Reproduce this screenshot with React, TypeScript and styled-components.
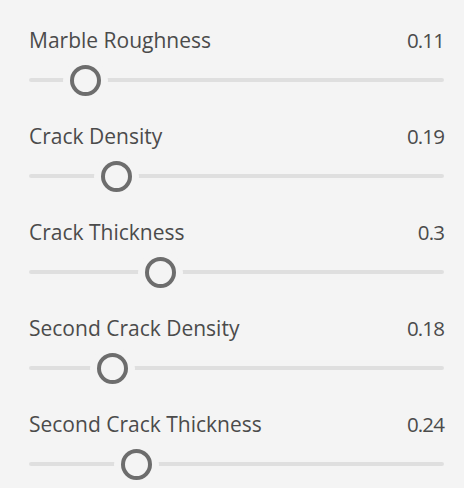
import React from 'react'
import styled, { createGlobalStyle } from 'styled-components'

const GlobalStyle = createGlobalStyle`
  html, body {
    margin: 0;
    padding: 0;
    background: #f4f4f4;
  }
  body {
    font-family: "Open Sans", "Liberation Sans", sans-serif;
  }
`

interface SliderItem {
  label: string
  value: number
}

const sliders: SliderItem[] = [
  { label: 'Marble Roughness', value: 0.11 },
  { label: 'Crack Density', value: 0.19 },
  { label: 'Crack Thickness', value: 0.3 },
  { label: 'Second Crack Density', value: 0.18 },
  { label: 'Second Crack Thickness', value: 0.24 },
]

const Panel = styled.div`
  width: 464px;
  height: 488px;
  box-sizing: border-box;
  padding: 16px 20px 0 29px;
  display: flex;
  flex-direction: column;
  gap: 16px;
  background: #f4f4f4;
  overflow: hidden;
`

const Row = styled.div`
  display: flex;
  flex-direction: column;
`

const Header = styled.div`
  height: 48px;
  display: flex;
  align-items: center;
  justify-content: space-between;
  color: #4b4b4b;
  font-size: 21px;
`

const Label = styled.span``

const Value = styled.span`
  font-size: 20.5px;
  letter-spacing: -0.9px;
`

const Track = styled.div`
  position: relative;
  height: 32px;
  display: flex;
  align-items: center;
  &::before {
    content: '';
    display: block;
    width: 100%;
    height: 4px;
    border-radius: 2px;
    background: #dfdfdf;
  }
`

const Knob = styled.div`
  position: absolute;
  top: 50%;
  width: 31px;
  height: 31px;
  box-sizing: border-box;
  margin: -15.5px 0 0 -15.5px;
  border-radius: 50%;
  border: 4px solid #6d6d6d;
  background: #f4f4f4;
  box-shadow: 0 0 0 7px #f4f4f4;
`

function Slider({ label, value }: SliderItem) {
  // knob centre measured in px from the track's left edge
  const left = 12.6 + value * 395
  return (
    <Row>
      <Header>
        <Label>{label}</Label>
        <Value>{value}</Value>
      </Header>
      <Track>
        <Knob style={{ left }} />
      </Track>
    </Row>
  )
}

export default function App() {
  return (
    <>
      <GlobalStyle />
      <Panel>
        {sliders.map((s) => (
          <Slider key={s.label} {...s} />
        ))}
      </Panel>
    </>
  )
}
